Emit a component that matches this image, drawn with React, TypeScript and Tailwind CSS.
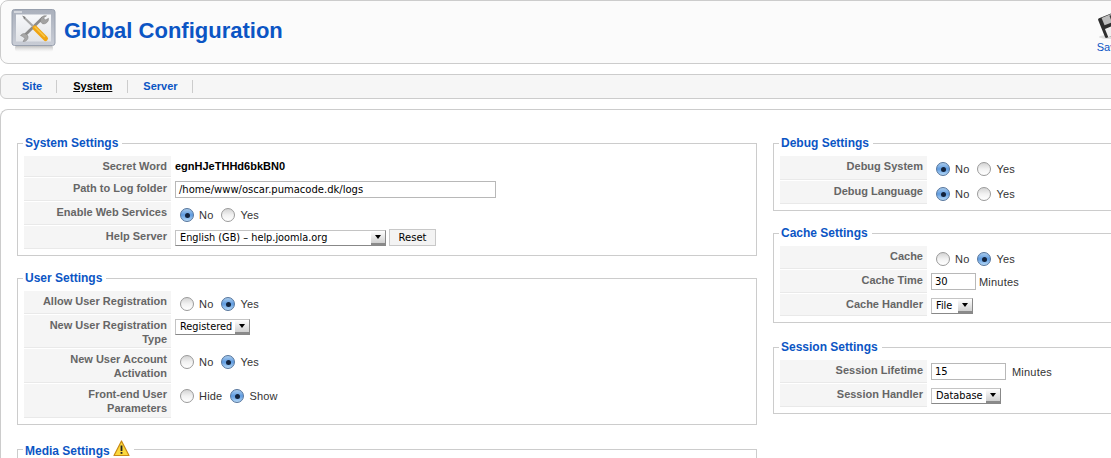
import type { ReactNode } from "react";

function ToolsIcon() {
  return (
    <svg width="48" height="46" viewBox="0 0 48 46" className="shrink-0">
      <defs>
        <linearGradient id="frame" x1="0" y1="0" x2="0" y2="1">
          <stop offset="0" stopColor="#aab0bc" />
          <stop offset="1" stopColor="#c9cdd6" />
        </linearGradient>
        <linearGradient id="pane" x1="0" y1="0" x2="0" y2="1">
          <stop offset="0" stopColor="#f7f8fa" />
          <stop offset="1" stopColor="#e2e4e8" />
        </linearGradient>
        <linearGradient id="shade" x1="0" y1="0" x2="0" y2="1">
          <stop offset="0" stopColor="#8d8d8d" stopOpacity="0.7" />
          <stop offset="1" stopColor="#cfcfcf" stopOpacity="0" />
        </linearGradient>
      </defs>
      <rect x="4" y="36" width="38" height="7" rx="3" fill="url(#shade)" />
      <rect x="1" y="0.5" width="43" height="36" rx="2.5" fill="url(#frame)" stroke="#98a0ae" />
      <rect x="5" y="5.5" width="35" height="27" fill="url(#pane)" />
      <rect x="3" y="2" width="8" height="2" fill="#d5d8de" />
      <path d="M32 8.500 L13 27" stroke="#8b8b8b" strokeWidth="2.800" />
      <path d="M35.500 6.800 a5 5 0 0 0 -6 6 l2 2 a5 5 0 0 0 6 -5.500 l-3 1.600 l-2 -2 z" fill="#a2a2a2" stroke="#7c7c7c" strokeWidth="0.5" />
      <path d="M9.500 26.500 a4.500 4.500 0 0 1 5.500 -1.500 l2 2 a4.500 4.500 0 0 1 -5 5.500 l1.800 -3 l-2 -2 z" fill="#a8a8a8" stroke="#7c7c7c" strokeWidth="0.5" />
      <path d="M13 8.500 L25 20" stroke="#a7a7a7" strokeWidth="2.200" />
      <path d="M11 6.500 L14.500 8 L13.500 10 z" fill="#777" />
      <path d="M24 19 L34.500 29.500" stroke="#f0a412" strokeWidth="5" strokeLinecap="round" />
      <path d="M24 18 L33.500 27.500" stroke="#f8c84a" strokeWidth="1.500" strokeLinecap="round" />
    </svg>
  );
}

function SaveIcon() {
  return (
    <svg width="32" height="28" viewBox="0 0 32 28" className="block">
      <ellipse cx="16" cy="25" rx="13" ry="2" fill="#dedede" />
      <g transform="rotate(-22 16 13)">
        <rect x="5" y="2" width="22" height="21" rx="1.500" fill="#2e2e2e" />
        <rect x="9" y="2.500" width="13" height="8" fill="#bdbdbd" />
        <rect x="17" y="3.500" width="3" height="6" fill="#3b3b3b" />
        <rect x="8" y="14" width="16" height="9" fill="#f0f0f0" />
      </g>
    </svg>
  );
}

function WarningIcon() {
  return (
    <svg width="17" height="17" viewBox="0 0 17 17" className="ml-[3px] mb-[1px] shrink-0">
      <path d="M8.500 1 L16 15.500 H1 Z" fill="#fbd83c" stroke="#c98a14" strokeWidth="1.200" strokeLinejoin="round" />
      <path d="M8.500 5.500 V11" stroke="#222" strokeWidth="1.800" />
      <rect x="7.600" y="12" width="1.800" height="1.800" fill="#222" />
    </svg>
  );
}

function Radio({ label, checked }: { label: string; checked?: boolean }) {
  return (
    <span className="flex items-center mr-[8px]">
      {checked ? (
        <span className="flex items-center justify-center w-[14px] h-[14px] rounded-full border border-[#54749c] bg-gradient-to-b from-[#a9cbec] via-[#5e9be0] to-[#b5d8f6]">
          <span className="w-[5px] h-[5px] rounded-full bg-[#13233c]" />
        </span>
      ) : (
        <span className="w-[14px] h-[14px] rounded-full border border-[#9a9a9a] bg-gradient-to-b from-[#d4d4d4] via-[#f2f2f2] to-[#ffffff]" />
      )}
      <span className="ml-[5px] text-[11px] leading-[14px] tracking-[0.2px] text-[#333]">{label}</span>
    </span>
  );
}

function Radios({ items, on, top = "pt-[6px]" }: { items: string[]; on: number; top?: string }) {
  return (
    <div className={"flex pl-[5px] " + top}>
      {items.map((item, i) => (
        <Radio key={item} label={item} checked={i === on} />
      ))}
    </div>
  );
}

function Select({ text, width, top = "mt-[4px]" }: { text: string; width: string; top?: string }) {
  return (
    <div className={"flex h-[16px] bg-white border border-[#c4c4c4] border-r-[#888] border-b-[#888] font-['DejaVu_Sans',sans-serif] text-[9.750px] leading-[14px] text-black " + width + " " + top}>
      <span className="flex-1 pl-[4px] whitespace-nowrap overflow-hidden">{text}</span>
      <span className="flex items-center justify-center w-[14px] bg-gradient-to-b from-[#ffffff] to-[#d0d0d0] border-b-2 border-[#8a8a8a]">
        <span className="w-0 h-0 border-x-[3px] border-x-transparent border-t-[4px] border-t-black" />
      </span>
    </div>
  );
}

function TextBox({ value, width }: { value: string; width: string }) {
  return (
    <div className={"h-[17px] mt-[3px] px-[3px] bg-white border border-[#b8b8b8] font-['DejaVu_Sans',sans-serif] text-[10px] leading-[15px] text-black whitespace-nowrap " + width}>
      {value}
    </div>
  );
}

function Row({ label, height, children }: { label: ReactNode; height: string; children: ReactNode }) {
  return (
    <div className={"flex mb-[1px] " + height}>
      <div className="w-[147px] shrink-0 pt-[2.500px] pr-[4px] bg-[#f5f5f5] border-b border-[#e9e9e9] text-right text-[11px] leading-[14px] font-bold text-[#666]">
        {label}
      </div>
      <div className="flex-1 pl-[4px]">{children}</div>
    </div>
  );
}

function Group({ title, extra, className, children }: { title: string; extra?: ReactNode; className?: string; children?: ReactNode }) {
  return (
    <fieldset className={"border border-[#ccc] px-[6px] pb-[5px] " + (className ?? "")}>
      <legend className="flex items-end -ml-[1px] mb-[6px] pl-[2px] pr-[4px] text-[12px] leading-[14px] font-bold text-[#0b55c4]">
        {title}
        {extra}
      </legend>
      {children}
    </fieldset>
  );
}

export default function App() {
  return (
    <div className="w-[1111px] h-[458px] overflow-hidden bg-white font-['Liberation_Sans',Arial,sans-serif]">
      <div className="w-[1140px] h-[64px] flex items-start bg-[#fbfbfb] border border-[#ccc] rounded-l-lg">
        <div className="ml-[10px] mt-[8px]">
          <ToolsIcon />
        </div>
        <h1 className="ml-[5px] mt-[16px] text-[22px] leading-[28px] font-bold text-[#0b55c4]">Global Configuration</h1>
        <div className="ml-[813px] mt-[11px] w-[40px] text-[11px] leading-[13px] text-[#0b55c4]">
          <SaveIcon />
          <div className="ml-[1px] mt-[1px]">Save</div>
        </div>
      </div>

      <div className="w-[1140px] h-[25px] mt-[10px] flex items-center pl-[7px] bg-[#f6f6f6] border border-[#ccc] rounded-l-md text-[11px] font-bold text-[#0b55c4]">
        <span className="px-[14px] h-[13px] leading-[12px] border-r border-[#ccc]">Site</span>
        <span className="pl-[16px] pr-[15px] h-[13px] leading-[12px] border-r border-[#ccc]">
          <span className="text-black underline">System</span>
        </span>
        <span className="pl-[15px] pr-[14px] h-[13px] leading-[12px] border-r border-[#ccc]">Server</span>
      </div>

      <div className="w-[1140px] h-[400px] mt-[10px] flex gap-[15px] pt-[26px] pl-[16px] border-t border-l border-[#ccc] rounded-tl-lg">
        <div className="w-[740px] shrink-0">
          <Group title="System Settings">
            <Row label="Secret Word" height="h-[21px]">
              <div className="pt-[3px] text-[11px] leading-[14px] font-bold text-black">egnHJeTHHd6bkBN0</div>
            </Row>
            <Row label="Path to Log folder" height="h-[23px]">
              <TextBox value="/home/www/oscar.pumacode.dk/logs" width="w-[321px]" />
            </Row>
            <Row label="Enable Web Services" height="h-[23px]">
              <Radios items={["No", "Yes"]} on={0} />
            </Row>
            <Row label="Help Server" height="h-[23px]">
              <div className="flex items-start">
                <Select text="English (GB) – help.joomla.org" width="w-[211px]" />
                <div className="ml-[3px] mt-[3px] w-[47px] h-[17px] bg-[#f3f3f3] border border-[#c8c8c8] text-center font-['DejaVu_Sans',sans-serif] text-[10px] leading-[15px] text-black">
                  Reset
                </div>
              </div>
            </Row>
          </Group>

          <Group title="User Settings" className="mt-[15px]">
            <Row label="Allow User Registration" height="h-[23px]">
              <Radios items={["No", "Yes"]} on={1} />
            </Row>
            <Row label={<>New User Registration<br />Type</>} height="h-[33px]">
              <Select text="Registered" width="w-[75px]" />
            </Row>
            <Row label={<>New User Account<br />Activation</>} height="h-[34px]">
              <Radios items={["No", "Yes"]} on={1} />
            </Row>
            <Row label={<>Front-end User<br />Parameters</>} height="h-[34px]">
              <Radios items={["Hide", "Show"]} on={1} top="pt-[5px]" />
            </Row>
          </Group>

          <Group title="Media Settings" extra={<WarningIcon />} className="mt-[15px] h-[60px]" />
        </div>

        <div className="w-[360px] shrink-0 ml-[1px]">
          <Group title="Debug Settings">
            <Row label="Debug System" height="h-[24px]">
              <Radios items={["No", "Yes"]} on={0} />
            </Row>
            <Row label="Debug Language" height="h-[23px]">
              <Radios items={["No", "Yes"]} on={0} />
            </Row>
          </Group>

          <Group title="Cache Settings" className="mt-[15px]">
            <Row label="Cache" height="h-[23px]">
              <Radios items={["No", "Yes"]} on={1} />
            </Row>
            <Row label="Cache Time" height="h-[23px]">
              <div className="flex items-start">
                <TextBox value="30" width="w-[45px]" />
                <span className="ml-[3px] mt-[5px] text-[11px] leading-[14px] tracking-[0.2px] text-[#333]">Minutes</span>
              </div>
            </Row>
            <Row label="Cache Handler" height="h-[22px]">
              <Select text="File" width="w-[42px]" />
            </Row>
          </Group>

          <Group title="Session Settings" className="mt-[17px]">
            <Row label="Session Lifetime" height="h-[23px]">
              <div className="flex items-start">
                <TextBox value="15" width="w-[75px]" />
                <span className="ml-[6px] mt-[5px] text-[11px] leading-[14px] tracking-[0.2px] text-[#333]">Minutes</span>
              </div>
            </Row>
            <Row label="Session Handler" height="h-[23px]">
              <Select text="Database" width="w-[70px]" />
            </Row>
          </Group>
        </div>
      </div>
    </div>
  );
}
